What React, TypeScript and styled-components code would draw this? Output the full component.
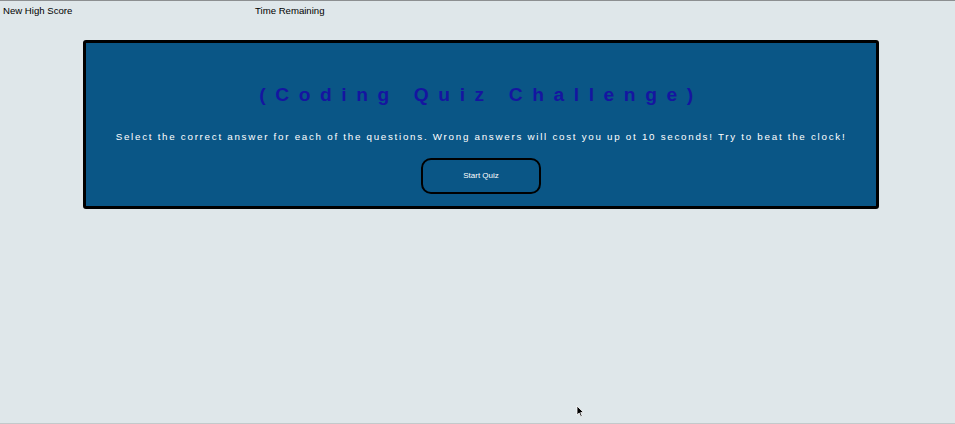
import React from "react";
import styled, { createGlobalStyle } from "styled-components";

const Global = createGlobalStyle`
  html, body { margin: 0; padding: 0; background: #dfe7ea; }
  body { font-family: "Liberation Sans", Arial, sans-serif; }
`;

const Page = styled.div`
  position: relative;
  box-sizing: border-box;
  height: 424px;
  border-top: 1px solid #8c8f91;
  border-bottom: 1px solid #c3c9cb;
  background: #dfe7ea;
  overflow: hidden;
`;

const Header = styled.header`
  display: grid;
  grid-template-columns: 252px auto;
  padding: 4.3px 0 0 3px;
  font-size: 9.6px;
  line-height: 11px;
  color: #000;
`;

const HeaderItem = styled.div`
  white-space: nowrap;
`;

const Card = styled.section`
  box-sizing: border-box;
  margin: 23.7px 0 0 83px;
  width: 796px;
  height: 169px;
  border: 3px solid #000;
  border-radius: 3px;
  background: #0a5686;
  display: flex;
  flex-direction: column;
  align-items: center;
  padding-top: 41px;
`;

const Title = styled.h1`
  margin: 0;
  font-size: 19.2px;
  line-height: 22px;
  font-weight: 700;
  letter-spacing: 9.6px;
  color: #1515a0;
  white-space: nowrap;
`;

const Subtitle = styled.p`
  margin: 25px 0 0;
  font-size: 9.8px;
  line-height: 11px;
  letter-spacing: 1.72px;
  color: #fff;
  white-space: nowrap;
`;

const StartButton = styled.button`
  box-sizing: border-box;
  margin-top: 16px;
  width: 120px;
  height: 36px;
  border: 2px solid #000;
  border-radius: 10px;
  background: transparent;
  color: #fff;
  font-family: "Liberation Sans", Arial, sans-serif;
  font-size: 8px;
  cursor: pointer;
`;

const Cursor = styled.svg`
  position: absolute;
  left: 576px;
  top: 404px;
  width: 9px;
  height: 13px;
`;

export default function App() {
  return (
    <>
      <Global />
      <Page>
        <Header>
          <HeaderItem>New High Score</HeaderItem>
          <HeaderItem>Time Remaining</HeaderItem>
        </Header>
        <Card>
          <Title>(Coding Quiz Challenge)</Title>
          <Subtitle>
            Select the correct answer for each of the questions. Wrong answers will cost you up ot 10 seconds! Try to beat the clock!
          </Subtitle>
          <StartButton>Start Quiz</StartButton>
        </Card>
        <Cursor viewBox="0 0 9 13">
          <path d="M1 1 L1 10 L3.2 8 L4.8 11.8 L6.2 11.2 L4.7 7.6 L7.6 7.6 Z" fill="#000" stroke="#fff" strokeWidth="0.8" />
        </Cursor>
      </Page>
    </>
  );
}
